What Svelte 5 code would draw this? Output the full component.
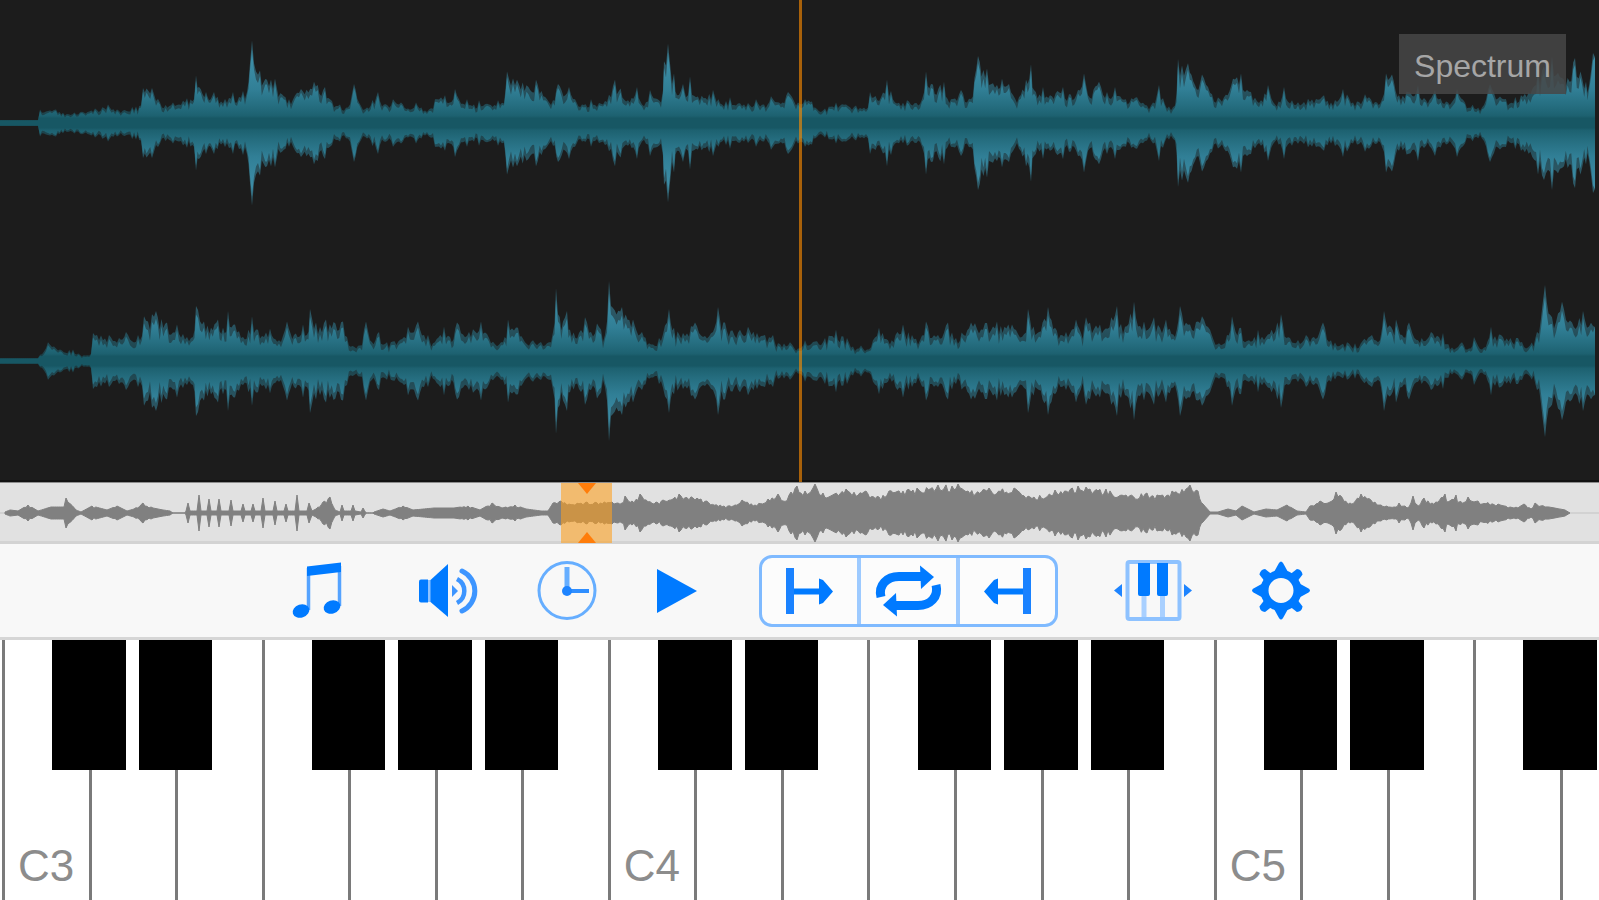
<script lang="ts">
	type Point = [number, number];

	// peak envelopes as flat x, height pairs
	const left = [
		0, 3, 38, 3, 40, 13, 56, 13, 63, 10, 82, 11, 95, 14, 108, 18, 117, 13, 136, 16, 141, 17, 143, 34, 152, 34,
		160, 20, 173, 20, 187, 24, 194, 23, 196, 46, 199, 35, 206, 30, 209, 22, 214, 30, 221, 21, 233, 30, 235, 20,
		243, 31, 247, 30, 250, 58, 252, 80, 254, 58, 260, 51, 267, 42, 275, 43, 282, 28, 289, 23, 301, 33, 314, 40,
		325, 35, 330, 23, 340, 18, 348, 15, 354, 38, 359, 20, 367, 15, 378, 30, 384, 18, 393, 23, 401, 20, 408, 14,
		416, 20, 425, 12, 429, 13, 435, 23, 445, 27, 450, 20, 455, 33, 459, 23, 467, 23, 474, 18, 479, 22, 489, 18,
		498, 22, 504, 19, 507, 50, 517, 42, 536, 42, 547, 23, 553, 22, 558, 38, 569, 35, 575, 23, 582, 18, 591, 23,
		603, 18, 615, 42, 628, 22, 637, 35, 642, 18, 650, 32, 659, 22, 663, 32, 664, 60, 668, 77, 670, 58, 674, 48,
		677, 27, 683, 38, 686, 25, 690, 45, 696, 25, 713, 32, 722, 18, 730, 25, 744, 18, 756, 23, 764, 18, 771, 26,
		779, 20, 788, 30, 798, 20, 805, 23, 812, 21, 815, 15, 825, 14, 836, 20, 856, 17, 868, 15, 870, 30, 881, 25,
		887, 42, 895, 20, 907, 22, 922, 23, 926, 50, 931, 38, 944, 40, 951, 23, 961, 32, 971, 23, 978, 65, 987, 53,
		997, 37, 1002, 43, 1009, 38, 1019, 25, 1026, 42, 1031, 57, 1034, 32, 1043, 35, 1050, 27, 1063, 35, 1069, 28,
		1078, 32, 1084, 48, 1088, 27, 1099, 40, 1107, 30, 1115, 35, 1122, 23, 1137, 25, 1151, 17, 1159, 37, 1165, 18,
		1175, 17, 1178, 62, 1188, 58, 1195, 37, 1202, 47, 1212, 28, 1224, 25, 1233, 43, 1241, 48, 1251, 30, 1261, 22,
		1268, 37, 1275, 18, 1284, 35, 1292, 22, 1324, 27, 1331, 20, 1343, 33, 1353, 20, 1365, 28, 1377, 20, 1382, 23,
		1386, 48, 1392, 47, 1399, 27, 1418, 37, 1426, 22, 1435, 32, 1448, 20, 1457, 33, 1465, 20, 1482, 15, 1490, 38,
		1504, 23, 1521, 27, 1538, 50, 1552, 65, 1564, 42, 1575, 63, 1586, 40, 1589, 36, 1593, 68, 1595, 66
	];
	const right = [
		0, 3, 38, 3, 48, 18, 60, 11, 73, 11, 80, 6, 91, 7, 93, 27, 109, 25, 119, 22, 126, 28, 142, 24, 144, 43,
		156, 48, 167, 37, 177, 35, 187, 23, 193, 23, 196, 53, 204, 38, 211, 32, 218, 40, 223, 32, 228, 48, 235, 35,
		243, 23, 252, 43, 258, 30, 270, 31, 279, 20, 287, 38, 294, 25, 303, 35, 307, 25, 310, 50, 316, 37, 326, 40,
		343, 38, 347, 23, 360, 15, 366, 38, 370, 20, 379, 28, 387, 18, 404, 23, 408, 33, 418, 38, 428, 25, 433, 17,
		444, 33, 450, 23, 457, 37, 469, 28, 481, 38, 489, 22, 503, 18, 508, 40, 518, 32, 525, 18, 533, 20, 547, 17,
		553, 28, 556, 70, 558, 45, 563, 38, 567, 48, 570, 30, 579, 27, 585, 42, 591, 28, 597, 36, 605, 25, 609, 77,
		611, 53, 622, 52, 633, 40, 642, 28, 649, 17, 659, 22, 669, 50, 674, 32, 683, 27, 695, 37, 703, 23, 713, 28,
		718, 52, 725, 37, 740, 30, 748, 33, 757, 27, 773, 25, 778, 17, 790, 18, 798, 12, 805, 20, 825, 22, 836, 30,
		847, 22, 853, 14, 861, 15, 869, 11, 873, 20, 879, 32, 888, 20, 903, 35, 912, 25, 920, 20, 926, 38, 936, 23,
		948, 37, 956, 22, 971, 37, 997, 38, 1012, 35, 1022, 23, 1028, 50, 1039, 28, 1048, 52, 1055, 32, 1066, 28,
		1076, 40, 1081, 27, 1086, 42, 1100, 35, 1117, 53, 1125, 33, 1134, 57, 1144, 38, 1154, 42, 1166, 40, 1175, 23,
		1180, 53, 1190, 35, 1202, 43, 1210, 30, 1219, 17, 1227, 25, 1232, 43, 1241, 32, 1249, 20, 1258, 30, 1266, 23,
		1281, 45, 1290, 22, 1306, 25, 1312, 22, 1323, 37, 1331, 20, 1355, 17, 1372, 25, 1380, 20, 1384, 48, 1391, 33,
		1396, 40, 1402, 25, 1409, 37, 1418, 20, 1431, 28, 1443, 27, 1452, 13, 1462, 18, 1469, 12, 1474, 23, 1484, 13,
		1491, 33, 1501, 25, 1518, 22, 1530, 15, 1537, 28, 1545, 73, 1552, 42, 1562, 57, 1572, 37, 1583, 48, 1595, 34
	];
	const song = [
		5, 1, 10, 3, 18, 2, 28, 8, 38, 2, 51, 6, 64, 6, 66, 15, 76, 3, 81, 1, 92, 7, 107, 3, 117, 7, 127, 2, 134, 4,
		143, 10, 153, 5, 163, 3, 170, 2, 173, 0, 185, 0, 186, 2, 188, 10, 190, 2, 197, 2, 199, 18, 201, 2, 207, 2,
		209, 14, 211, 2, 217, 2, 219, 14, 221, 2, 229, 2, 231, 13, 233, 2, 241, 2, 243, 9, 245, 2, 251, 2, 253, 9,
		255, 2, 261, 2, 263, 15, 265, 2, 273, 2, 275, 12, 277, 2, 284, 2, 286, 9, 288, 2, 295, 2, 297, 18, 299, 2,
		307, 2, 309, 10, 312, 2, 316, 4, 323, 11, 330, 16, 335, 3, 340, 1, 342, 8, 344, 2, 351, 2, 353, 8, 355, 2,
		361, 1, 363, 5, 366, 0, 373, 0, 374, 1, 383, 4, 390, 2, 403, 7, 413, 3, 434, 5, 454, 5, 468, 7, 480, 3,
		492, 10, 502, 5, 515, 8, 526, 4, 541, 2, 548, 2, 553, 10, 561, 12, 569, 9, 587, 11, 612, 11, 622, 10, 625, 17,
		632, 12, 640, 19, 656, 11, 663, 13, 673, 14, 679, 19, 701, 14, 724, 7, 735, 8, 742, 13, 755, 8, 768, 14,
		778, 19, 783, 12, 791, 21, 797, 27, 805, 22, 815, 29, 823, 20, 846, 24, 866, 22, 879, 16, 889, 22, 917, 25,
		938, 28, 958, 29, 968, 22, 989, 25, 1014, 25, 1034, 16, 1055, 23, 1078, 27, 1106, 24, 1126, 18, 1147, 20,
		1157, 18, 1172, 22, 1190, 28, 1198, 22, 1203, 9, 1210, 1, 1218, 1, 1228, 4, 1236, 2, 1242, 7, 1254, 1,
		1266, 4, 1277, 3, 1287, 8, 1297, 2, 1306, 1, 1310, 7, 1320, 12, 1328, 10, 1336, 21, 1350, 10, 1361, 19,
		1381, 8, 1394, 6, 1399, 10, 1409, 6, 1413, 17, 1417, 8, 1424, 15, 1432, 10, 1445, 19, 1448, 11, 1456, 18,
		1459, 11, 1468, 16, 1478, 12, 1498, 9, 1514, 5, 1524, 9, 1531, 4, 1535, 10, 1549, 6, 1565, 3, 1570, 0
	];

	function pairs(flat: number[]): Point[] {
		const out: Point[] = [];
		for (let i = 0; i < flat.length; i += 2) out.push([flat[i], flat[i + 1]]);
		return out;
	}

	function noise(n: number) {
		const s = Math.sin(n * 127.1) * 43758.5453;
		return s - Math.floor(s);
	}

	// mirrored outline; rough is how far a sample may dip below the envelope
	function outline(flat: number[], rough: number, scale = 1) {
		const pts = pairs(flat);
		const top: Point[] = [];
		for (let i = 0; i < pts.length - 1; i++) {
			const [x0, h0] = pts[i];
			const [x1, h1] = pts[i + 1];
			const steps = Math.max(1, Math.round((x1 - x0) / 2));
			for (let s = 0; s < steps; s++) {
				const x = x0 + ((x1 - x0) * s) / steps;
				const h = h0 + ((h1 - h0) * s) / steps;
				// keep the listed peaks themselves at full height
				const dip = s > 0 && h > 6 ? noise(x) * rough : 0;
				top.push([x, h * scale * (1 - dip)]);
			}
		}
		top.push(pts[pts.length - 1]);
		const up = top.map(([x, h]) => `${x.toFixed(1)} ${(-h).toFixed(1)}`);
		const down = top.map(([x, h]) => `${x.toFixed(1)} ${h.toFixed(1)}`).reverse();
		return `M${up.join('L')}L${down.join('L')}Z`;
	}

	const tracks = [
		{ name: 'Left channel', peak: outline(left, 0.3, 1.03), body: outline(left, 0.45, 0.92) },
		{ name: 'Right channel', peak: outline(right, 0.35, 1.04), body: outline(right, 0.5, 0.88) }
	];
	const overview = outline(song, 0.28);

	// nineteen white keys from C3; the last runs off the right side
	const names = ['C', 'D', 'E', 'F', 'G', 'A', 'B'];
	const keys = Array.from({ length: 19 }, (_, i) => {
		const name = names[i % 7];
		return { name, octave: 3 + Math.floor(i / 7), sharp: name !== 'E' && name !== 'B' && i < 18 };
	});
</script>

<main class="app">
	<section class="deck" aria-label="Waveform">
		<svg class="defs" width="0" height="0" aria-hidden="true">
			<linearGradient id="teal" gradientUnits="userSpaceOnUse" x1="0" y1="-60" x2="0" y2="60">
				<stop offset="0" stop-color="#3c8ca5" />
				<stop offset="0.22" stop-color="#317f96" />
				<stop offset="0.36" stop-color="#256d7f" />
				<stop offset="0.44" stop-color="#1d6170" />
				<stop offset="0.46" stop-color="#175764" />
				<stop offset="0.54" stop-color="#175764" />
				<stop offset="0.56" stop-color="#1d6170" />
				<stop offset="0.64" stop-color="#256d7f" />
				<stop offset="0.78" stop-color="#317f96" />
				<stop offset="1" stop-color="#3c8ca5" />
			</linearGradient>
		</svg>
		{#each tracks as track}
			<div class="track">
				<svg viewBox="0 -100 1599 200" preserveAspectRatio="none" role="img" aria-label={track.name}>
					<path d={track.peak} fill="url(#teal)" opacity="0.55" />
					<path d={track.body} fill="url(#teal)" />
				</svg>
			</div>
		{/each}
		<div class="playhead"></div>
		<button class="spectrum">Spectrum</button>
	</section>

	<section class="overview" aria-label="Song overview">
		<svg viewBox="0 -30 1599 60" preserveAspectRatio="none" aria-hidden="true">
			<path d="M0 0H1599" stroke="#d2d2d2" stroke-width="2" />
			<path d={overview} fill="#808080" stroke="#808080" stroke-width="1" />
		</svg>
		<div class="window"></div>
	</section>

	<nav class="toolbar" aria-label="Controls">
		<button aria-label="Songs">
			<svg width="88" height="65" viewBox="0 0 88 65">
				<path d="M35.500 10V52M66.500 8V48" stroke="#55a3ff" stroke-width="3.500" />
				<path d="M34 8.500L68 4.500V14L34 18Z" />
				<ellipse cx="28" cy="53" rx="8.500" ry="6.500" transform="rotate(-18 28 53)" />
				<ellipse cx="59" cy="49" rx="8.500" ry="6.500" transform="rotate(-18 59 49)" />
			</svg>
		</button>
		<button aria-label="Volume">
			<svg width="64" height="65" viewBox="0 0 64 65">
				<path d="M4 21.500H11V44.500H4Q2 44.500 2 42.500V23.500Q2 21.500 4 21.500Z" />
				<path d="M11 22H14V44H11Z" fill="#8ec2ff" />
				<path d="M13.500 22L31 6V59L13.500 44Z" />
				<path d="M35 27L41 33L35 39Z" fill="#3d95ff" />
				<path d="M40 21A13.500 13.500 0 0 1 40 45" fill="none" stroke="#3d95ff" stroke-width="4.500" />
				<path d="M45 13A22 22 0 0 1 45 53" fill="none" stroke="#3d95ff" stroke-width="5" stroke-linecap="round" />
			</svg>
		</button>
		<button aria-label="Speed">
			<svg width="60" height="65" viewBox="0 0 60 65">
				<circle cx="30" cy="32.500" r="28" fill="none" stroke="#66aeff" stroke-width="3" />
				<path d="M30 9V33" stroke="#66aeff" stroke-width="5" />
				<path d="M30 33H52" stroke="#2f8eff" stroke-width="4" />
				<circle cx="30" cy="33" r="5" fill="#1e84ff" />
			</svg>
		</button>
		<button aria-label="Play">
			<svg width="50" height="65" viewBox="0 0 50 65">
				<path d="M4 11L44 33L4 55Z" />
			</svg>
		</button>
		<div class="loop" role="group" aria-label="Loop">
			<button aria-label="Loop start">
				<svg width="95" height="65" viewBox="0 0 95 65">
					<path d="M24 10H32V56H24Z" fill="#1a82ff" />
					<path d="M32 30.500H57V20.500L61 22L71 33.500L61 45L57 46.500V36.500H32Z" />
				</svg>
			</button>
			<button aria-label="Repeat">
				<svg width="95" height="65" viewBox="0 0 95 65">
					<g id="half">
						<path d="M20 39C17 27 26 18.500 38 18.500H61" fill="none" stroke="#007aff" stroke-width="9" />
						<path d="M59 7.500L73 19L60 31Z" />
					</g>
					<use href="#half" transform="rotate(180 47.500 33)" />
				</svg>
			</button>
			<button aria-label="Loop end">
				<svg width="95" height="65" viewBox="0 0 95 65">
					<path d="M63 10H71V56H63Z" fill="#1a82ff" />
					<path d="M63 30.500H38V20.500L34 22L24 33.500L34 45L38 46.500V36.500H63Z" />
				</svg>
			</button>
		</div>
		<button aria-label="Keyboard range">
			<svg width="78" height="65" viewBox="0 0 78 65">
				<path d="M30 38V61M48.500 38V61" stroke="#a9d0ff" stroke-width="5" />
				<rect x="13.500" y="4" width="52" height="57" rx="2" fill="none" stroke="#8ec2ff" stroke-width="4" />
				<path d="M24 5H36V36Q36 38 34 38H26Q24 38 24 36ZM43 5H54V36Q54 38 52 38H45Q43 38 43 36Z" />
				<path d="M0 32.500L8 26V39ZM78 32.500L70 26V39Z" fill="#1e84ff" />
			</svg>
		</button>
		<button aria-label="Settings">
			<svg width="66" height="65" viewBox="0 0 66 65">
				<circle cx="33" cy="32.500" r="16.500" fill="none" stroke="#007aff" stroke-width="8" />
				{#each [0, 90, 180, 270] as turn}
					<path d="M26 14L31 5Q33 2 35 5L40 14Z" transform="rotate({turn} 33 32.5)" />
					<path d="M28 14L29 6Q33 3 37 6L38 14Z" transform="rotate({turn + 45} 33 32.5)" />
				{/each}
			</svg>
		</button>
	</nav>

	<section class="keyboard" aria-label="Piano">
		{#each keys as key}
			<div class="slot">
				<button class="white" aria-label={key.name + key.octave}>
					{#if key.name === 'C'}{key.name}{key.octave}{/if}
				</button>
				{#if key.sharp}
					<button class="black" aria-label="{key.name}#{key.octave}"></button>
				{/if}
			</div>
		{/each}
	</section>
</main>

<style>
	:global(body) {
		margin: 0;
		background: #fff;
	}
	.app {
		display: flex;
		flex-direction: column;
		min-height: 100vh;
		overflow: hidden;
		font-family: 'Liberation Sans', Arial, sans-serif;
	}
	button {
		padding: 0;
		border: 0;
		background: none;
		font: inherit;
		cursor: pointer;
	}
	svg {
		display: block;
	}

	.deck {
		position: relative;
		flex: 1;
		display: flex;
		flex-direction: column;
		box-sizing: border-box;
		padding-top: 4px;
		background: #1c1c1c;
		border-bottom: 2px solid #111;
	}
	.defs {
		position: absolute;
	}
	.track {
		flex: 1;
		display: flex;
		align-items: center;
	}
	.track svg {
		width: 100%;
		height: 200px;
	}
	.playhead {
		position: absolute;
		top: 0;
		bottom: -2px;
		left: 50%;
		width: 3px;
		margin-left: -1px;
		background: rgba(255, 140, 0, 0.62);
	}
	.spectrum {
		position: absolute;
		top: 34px;
		right: 33px;
		width: 167px;
		height: 60px;
		padding-top: 4px;
		background: rgba(70, 70, 70, 0.85);
		color: #a6a6a6;
		font-size: 32px;
	}

	.overview {
		position: relative;
		box-sizing: border-box;
		height: 62px;
		border-top: 1px solid #8c8c8c;
		border-bottom: 3px solid #d3d3d3;
		background: #e1e1e1;
	}
	.overview svg {
		width: 100%;
		height: 60px;
	}
	.window {
		position: absolute;
		top: 0;
		bottom: -2px;
		left: 35%;
		width: 51px;
		margin-left: 1px;
		background: rgba(255, 160, 30, 0.58);
	}
	.window::before,
	.window::after {
		content: '';
		position: absolute;
		left: 17px;
		border: 9px solid transparent;
	}
	.window::before {
		top: 0;
		border-top: 11px solid #ff7d0a;
		border-bottom: 0;
	}
	.window::after {
		bottom: 0;
		border-bottom: 11px solid #ff7d0a;
		border-top: 0;
	}

	.toolbar {
		display: flex;
		align-items: center;
		justify-content: center;
		gap: 56px;
		box-sizing: border-box;
		height: 96px;
		padding-right: 12px;
		background: #f8f8f8;
		border-bottom: 3px solid #d6d6d6;
	}
	.toolbar svg {
		fill: #007aff;
	}
	.loop {
		display: flex;
		align-items: stretch;
		box-sizing: border-box;
		height: 72px;
		border: 3px solid #7fbaff;
		border-radius: 13px;
		background: #fcfcfc;
	}
	.loop button + button {
		border-left: 4px solid #9dcaff;
	}

	.keyboard {
		display: grid;
		grid-template-columns: repeat(19, 5.42%);
		height: 260px;
		padding-left: 2px;
		background: #fff;
	}
	.slot {
		position: relative;
	}
	.white {
		display: flex;
		align-items: flex-end;
		box-sizing: border-box;
		width: 100%;
		height: 100%;
		padding: 0 0 10px 13px;
		border-left: 3px solid #7a7a7a;
		background: #fff;
		color: #8c8c8c;
		font-size: 44px;
		line-height: 48px;
	}
	.black {
		position: absolute;
		z-index: 1;
		top: 0;
		left: 58%;
		width: 85%;
		height: 50%;
		background: #000;
	}
</style>
